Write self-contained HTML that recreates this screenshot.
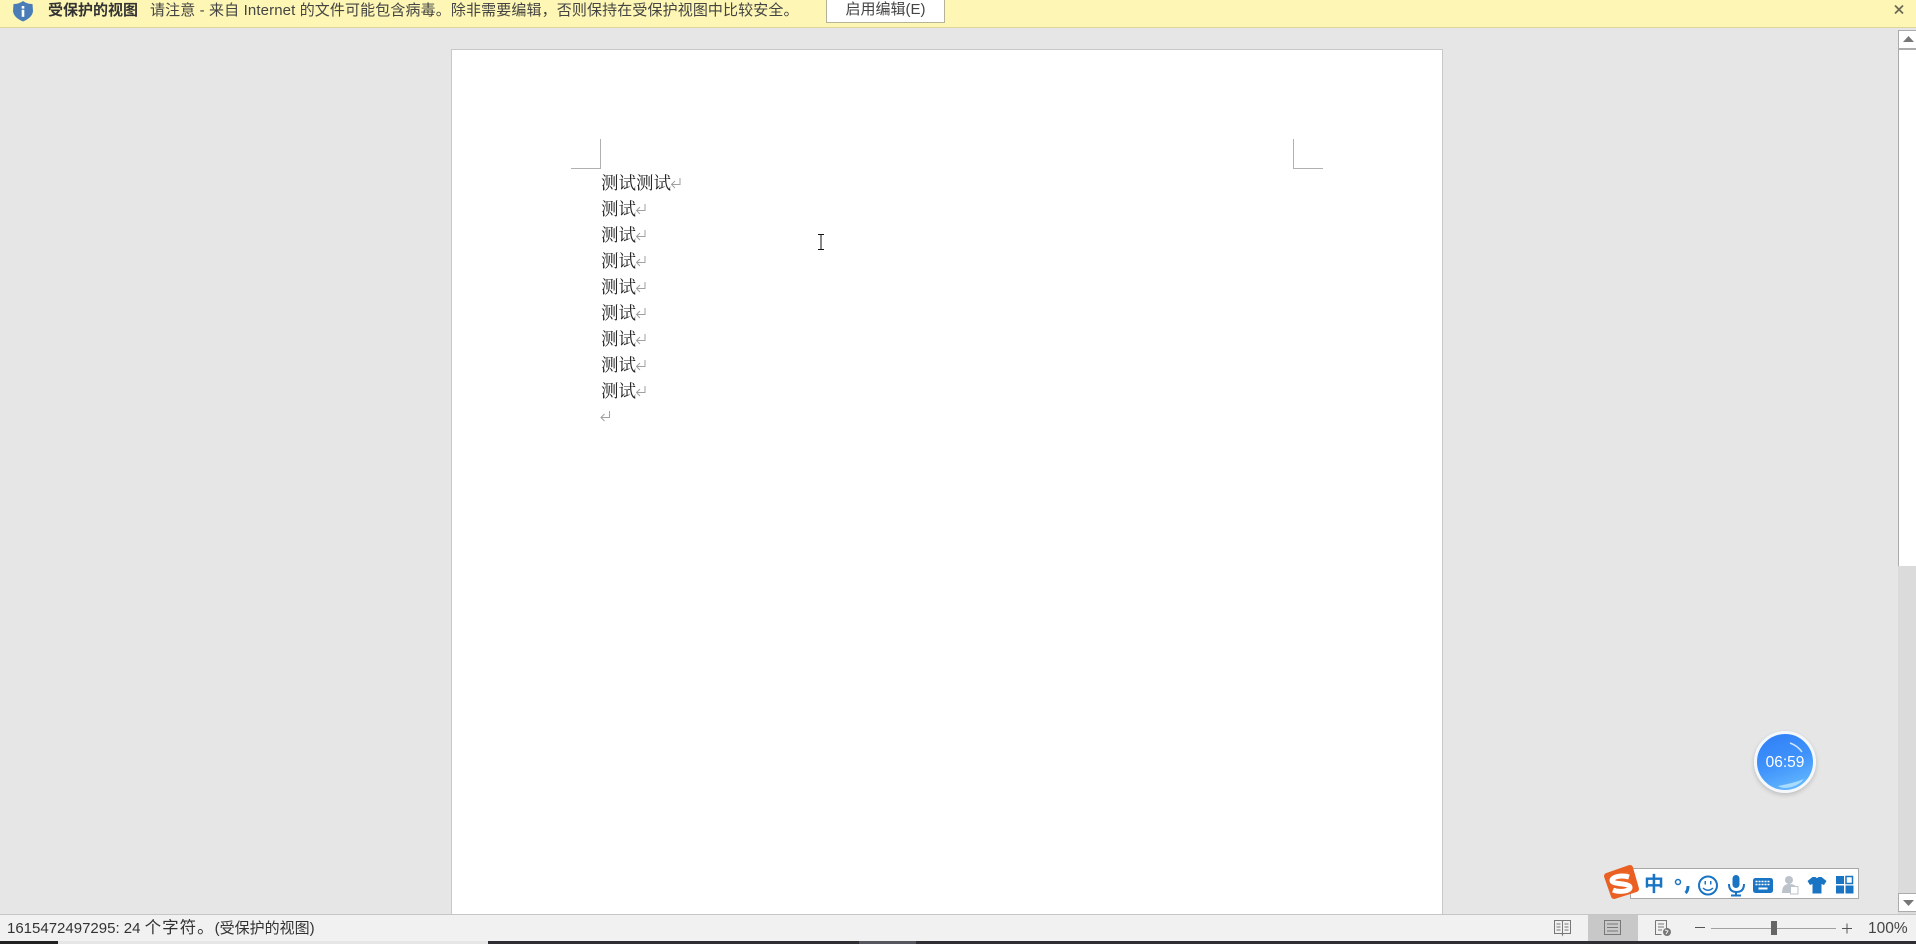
<!DOCTYPE html>
<html lang="zh"><head><meta charset="utf-8"><title>受保护的视图</title>
<style>
html,body{margin:0;padding:0;width:1916px;height:944px;overflow:hidden;background:#e6e6e6;font-family:"Liberation Sans","Noto Sans CJK SC",sans-serif}
.a{position:absolute}
#bar{left:0;top:0;width:1916px;height:27px;background:#fdf6b4;border-bottom:1px solid #dcd79c}
.t{white-space:nowrap;color:#444;font-size:15px;line-height:22px}
#page{left:451px;top:49px;width:990px;height:865px;background:#fff;border:1px solid #c8c8c8;border-bottom:0;box-sizing:content-box}
.l{position:absolute;left:601px;font-family:"Noto Serif CJK SC","Liberation Serif",serif;font-size:17.5px;line-height:26px;color:#222;white-space:nowrap}
#status{left:0;top:914px;width:1916px;height:27px;background:#f1f1f1;border-top:1px solid #c6c6c6;box-sizing:border-box}
</style></head><body>
<div id="bar" class="a"></div>
<svg class="a" style="left:12px;top:0" width="23" height="23" viewBox="0 0 23 23"><path d="M11 1 Q15 4 20.500 4 L21 11 Q20.500 17.500 11 21.500 Q1.500 17.500 1 11 L1.500 4 Q7 4 11 1Z" fill="#4a7db8"/><rect x="9.700" y="6" width="2.600" height="2.600" fill="#fff"/><rect x="9.700" y="9.800" width="2.600" height="7" fill="#fff"/></svg>
<div class="a t" style="left:48px;top:0;font-weight:bold;color:#333">受保护的视图</div>
<div class="a t" style="left:150px;top:0;letter-spacing:.12px">请注意 - 来自 Internet 的文件可能包含病毒。除非需要编辑，否则保持在受保护视图中比较安全。</div>
<div class="a t" style="left:826px;top:-1px;width:117px;height:22px;background:#fff;border:1px solid #b5b29a;text-align:center;line-height:20px;color:#444">启用编辑(E)</div>
<svg class="a" style="left:1893px;top:4px" width="12" height="12" viewBox="0 0 12 12"><path d="M2 1.500L10 9.500M10 1.500L2 9.500" stroke="#6f6a58" stroke-width="1.800"/></svg>

<div id="page" class="a"></div>
<svg class="a" style="left:0;top:0" width="1916" height="944"><path d="M600.500 139V168.500H571M1293.500 139V168.500H1323" fill="none" stroke="#b0b0b0"/></svg>
<div class="l" style="top:170px">测试测试</div>
<div class="l" style="top:196px">测试</div>
<div class="l" style="top:222px">测试</div>
<div class="l" style="top:248px">测试</div>
<div class="l" style="top:274px">测试</div>
<div class="l" style="top:300px">测试</div>
<div class="l" style="top:326px">测试</div>
<div class="l" style="top:352px">测试</div>
<div class="l" style="top:378px">测试</div>
<svg class="a" style="left:0;top:0" width="1916" height="944" fill="none" stroke="#a0a0a0">
<defs><path id="ret" d="M9.500 0V6.500H1M4.500 3L1 6.500L4.500 10"/></defs>
<use href="#ret" x="670.500" y="178"/>
<use href="#ret" x="635.500" y="204"/>
<use href="#ret" x="635.500" y="230"/>
<use href="#ret" x="635.500" y="256"/>
<use href="#ret" x="635.500" y="282"/>
<use href="#ret" x="635.500" y="308"/>
<use href="#ret" x="635.500" y="334"/>
<use href="#ret" x="635.500" y="360"/>
<use href="#ret" x="635.500" y="386"/>
<use href="#ret" x="600" y="411"/>
</svg>
<svg class="a" style="left:816px;top:233px" width="10" height="18" viewBox="0 0 10 18"><path d="M2 1.500H8M5 1.500V16.500M2 16.500H8" stroke="#111" fill="none"/></svg>

<div class="a" style="left:1898px;top:30px;width:18px;height:884px;background:#dbdbdb"></div>
<div class="a" style="left:1898px;top:30px;width:18px;height:536px;background:#fff;border-left:1px solid #ababab;box-sizing:border-box"></div>
<div class="a" style="left:1898px;top:30px;width:18px;height:20px;background:#fff;border:1px solid #ababab;border-right:0;border-bottom:2px solid #ababab;box-sizing:border-box"></div>
<svg class="a" style="left:1902px;top:35px" width="14" height="8"><path d="M1 7L6.500 1L12 7Z" fill="#777"/></svg>
<div class="a" style="left:1898px;top:893px;width:18px;height:19px;background:#fff;border:1px solid #ababab;border-right:0;box-sizing:border-box"></div>
<svg class="a" style="left:1902px;top:899px" width="14" height="8"><path d="M1 1L6.500 7L12 1Z" fill="#777"/></svg>

<div id="status" class="a"></div>
<div class="a" style="left:7px;top:917px;font-size:15px;line-height:22px;color:#333;white-space:nowrap">1615472497295: 24 <span style="font-size:16.500px;letter-spacing:1px">个字符。</span>(受保护的视图)</div>
<div class="a" style="left:1588px;top:915px;width:50px;height:26px;background:#c8c8c8"></div>
<svg class="a" style="left:0;top:0" width="1916" height="944" fill="none">
<path d="M1554.500 920.500h7.500l.5 1 .5-1h7.500v13h-7.500l-.5 1.500-.5-1.500h-7.500zM1562.500 921v14M1556.500 924h4M1556.500 927h4M1556.500 930h4M1564.500 924h4M1564.500 927h4M1564.500 930h4" stroke="#777"/>
<path d="M1604.500 920.500h16v14h-16zM1607 924h11M1607 927.500h11M1607 931h11" stroke="#777"/>
<path d="M1655.500 920.500h11v9M1655.500 920.500v14h6M1658 924h6M1658 927h6M1658 930h4" stroke="#777"/><circle cx="1667" cy="932" r="4" fill="#777"/><path d="M1665 930l3 1-2 3" stroke="#f1f1f1"/>
<path d="M1711 928.500h125" stroke="#a0a0a0"/>
<path d="M1695 927.500h10M1842 928.500h10M1847 923.500v10" stroke="#555"/>
<rect x="1771" y="921" width="6" height="14" fill="#666"/>
</svg>
<div class="a" style="left:1868px;top:918px;font-size:15.500px;line-height:22px;color:#444">100%</div>

<div class="a" style="left:0;top:941px;width:58px;height:3px;background:#222"></div>
<div class="a" style="left:58px;top:941px;width:430px;height:3px;background:#e6e6e6"></div>
<div class="a" style="left:488px;top:941px;width:1428px;height:3px;background:#2f2f33"></div>
<div class="a" style="left:859px;top:941px;width:57px;height:3px;background:#56565e"></div>

<div class="a" style="left:1754px;top:731px;width:62px;height:62px;box-sizing:border-box;border-radius:50%;border:3px solid #f4f8fc;background:linear-gradient(160deg,#2f7df6 0%,#3f93fb 50%,#6cc0ff 100%);box-shadow:0 2px 5px rgba(0,0,0,.18)"></div>
<svg class="a" style="left:1754px;top:731px" width="62" height="62" fill="none"><path d="M36 12Q44 15 48 21" stroke="#cfe6ff" stroke-width="1.500"/><path d="M24 55Q40 52 50 48Q44 56 31 57Q27 57 24 55Z" fill="#a8dcff"/></svg>
<div class="a" style="left:1754px;top:751px;width:62px;text-align:center;color:#fff;font-size:15.500px;line-height:24px">06:59</div>

<div class="a" style="left:1630px;top:868px;width:229px;height:31px;background:#fff;border:1px solid #a8a8a8;box-sizing:border-box"></div>
<svg class="a" style="left:0;top:0" width="1916" height="944" fill="none">
<defs><linearGradient id="og" x1="0" y1="0" x2="0" y2="1"><stop offset="0" stop-color="#f4742f"/><stop offset="1" stop-color="#e4531a"/></linearGradient></defs>
<path d="M1607 876L1630 868L1636 889L1614 896Z" fill="url(#og)" stroke="#ea5f22" stroke-width="6" stroke-linejoin="round"/>
<path d="M1629 877C1621 874.500 1612 877 1612 880.500C1612 885 1630 882.500 1630 887.500C1630 891.500 1619 892.500 1613 890" stroke="#fff" stroke-width="5"/>
<circle cx="1678" cy="882" r="2.500" stroke="#1a74c4" stroke-width="1.500"/><path d="M1688 886q0 5-2.500 7" stroke="#1a74c4" stroke-width="3"/>
<circle cx="1708" cy="885.500" r="9" stroke="#1a74c4" stroke-width="2"/><rect x="1704.500" y="881" width="1.500" height="3.500" fill="#1a74c4"/><rect x="1710" y="881" width="1.500" height="3.500" fill="#1a74c4"/><path d="M1703 888q5 4.500 10 0" stroke="#1a74c4" stroke-width="1.500"/>
<rect x="1732.500" y="875" width="7" height="13" rx="3.500" fill="#1a74c4"/><path d="M1729 884q0 8 7.500 8t7.500-8M1736 892v3.500M1731 895.500h10" stroke="#1a74c4" stroke-width="2"/>
<rect x="1753" y="878" width="20" height="15" rx="2.500" fill="#1a74c4"/><path d="M1755.500 881.500h15M1755.500 884.500h15" stroke="#fff" stroke-width="1.500" stroke-dasharray="2 1"/><path d="M1758.500 888.500h9" stroke="#fff" stroke-width="2"/>
<circle cx="1789" cy="880" r="4" fill="#bcc3ca"/><path d="M1782 893q0-9 7-9t7 4v5z" fill="#bcc3ca"/><rect x="1790.500" y="886.500" width="7.500" height="7.500" fill="#fff" stroke="#bcc3ca"/>
<path d="M1812.500 877h3q1.500 2 3 0h3l5 4-2.500 4-2.500-1v9.500h-9v-9.500l-2.500 1-2.500-4z" fill="#1a74c4"/>
<rect x="1836" y="876" width="8" height="8" fill="#1a74c4"/><rect x="1846" y="876.500" width="6.500" height="7" stroke="#1a74c4" stroke-width="1.500"/><rect x="1836" y="885.500" width="8" height="8" fill="#1a74c4"/><rect x="1845.500" y="885.500" width="8" height="8" fill="#1a74c4"/>
</svg>
<div class="a" style="left:1643px;top:873px;width:22px;text-align:center;font-size:20px;font-weight:bold;line-height:24px;color:#1a74c4">中</div>
</body></html>
